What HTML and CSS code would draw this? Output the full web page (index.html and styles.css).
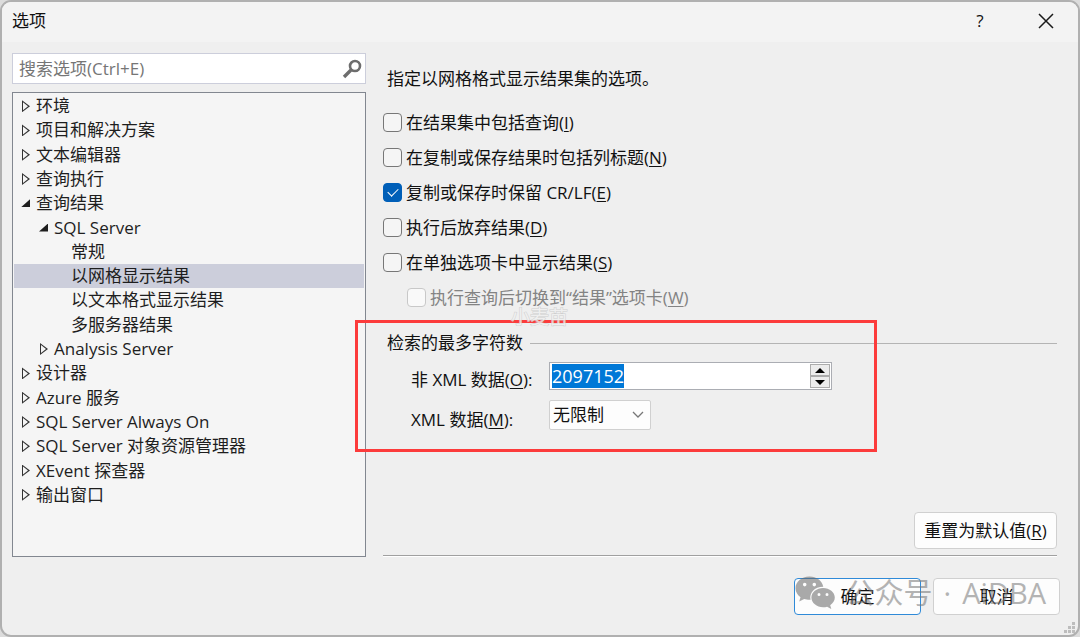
FILE: index.html
```html
<!DOCTYPE html>
<html lang="zh-CN">
<head>
    <meta charset="UTF-8">
    <meta name="viewport" content="width=device-width, initial-scale=1.0">
    <title>选项</title>
    <link rel="stylesheet" href="styles.css">
</head>
<body>

    <div class="dialog" role="dialog" aria-labelledby="dialogTitle">
        <!-- Title bar -->
        <header class="titlebar">
            <h1 class="title" id="dialogTitle">选项</h1>
            <button class="title-btn help" type="button">?</button>
            <button class="title-btn" type="button" aria-label="关闭">
                <svg width="16" height="16" viewBox="0 0 16 16"><path d="M1 1l14 14M15 1L1 15" stroke="#1a1a1a" stroke-width="1.5" fill="none"/></svg>
            </button>
        </header>

        <main class="content">
            <!-- Search and tree -->
            <nav class="sidebar">
                <div class="search">
                    <input type="text" placeholder="搜索选项(Ctrl+E)" aria-label="搜索选项">
                    <svg width="20" height="20" viewBox="0 0 20 20" fill="none" stroke="#6d6d6d"><circle cx="13" cy="7" r="5" stroke-width="2.6"/><path d="M9.500 10.500L2 18" stroke-width="3.4"/></svg>
                </div>
                <ul class="tree" role="tree">
                    <li class="closed" role="treeitem">环境</li>
                    <li class="closed" role="treeitem">项目和解决方案</li>
                    <li class="closed" role="treeitem">文本编辑器</li>
                    <li class="closed" role="treeitem">查询执行</li>
                    <li class="open" role="treeitem">查询结果</li>
                    <li class="open level-2" role="treeitem">SQL Server</li>
                    <li class="level-3" role="treeitem">常规</li>
                    <li class="level-3 selected" role="treeitem">以网格显示结果</li>
                    <li class="level-3" role="treeitem">以文本格式显示结果</li>
                    <li class="level-3" role="treeitem">多服务器结果</li>
                    <li class="closed level-2" role="treeitem">Analysis Server</li>
                    <li class="closed" role="treeitem">设计器</li>
                    <li class="closed" role="treeitem">Azure 服务</li>
                    <li class="closed" role="treeitem">SQL Server Always On</li>
                    <li class="closed" role="treeitem">SQL Server 对象资源管理器</li>
                    <li class="closed" role="treeitem">XEvent 探查器</li>
                    <li class="closed" role="treeitem">输出窗口</li>
                </ul>
            </nav>

            <!-- Options pane -->
            <section class="pane">
                <p class="description">指定以网格格式显示结果集的选项。</p>

                <div class="options">
                    <label class="option"><input type="checkbox"><span>在结果集中包括查询(<u>I</u>)</span></label>
                    <label class="option"><input type="checkbox"><span>在复制或保存结果时包括列标题(<u>N</u>)</span></label>
                    <label class="option"><input type="checkbox" checked><span>复制或保存时保留 CR/LF(<u>E</u>)</span></label>
                    <label class="option"><input type="checkbox"><span>执行后放弃结果(<u>D</u>)</span></label>
                    <label class="option"><input type="checkbox"><span>在单独选项卡中显示结果(<u>S</u>)</span></label>
                    <label class="option nested"><input type="checkbox" disabled><span>执行查询后切换到“结果”选项卡(<u>W</u>)</span></label>
                </div>

                <fieldset class="group">
                    <legend>检索的最多字符数</legend>
                    <div class="field">
                        <label for="nonXml">非 XML 数据(<u>O</u>):</label>
                        <div class="spinner">
                            <input type="text" inputmode="numeric" id="nonXml" value="2097152">
                            <div class="spinner-btns">
                                <button type="button" aria-label="增加"><svg width="10" height="5" viewBox="0 0 10 5"><path d="M0 5L5 0l5 5z"/></svg></button>
                                <button type="button" aria-label="减少"><svg width="10" height="5" viewBox="0 0 10 5"><path d="M0 0l5 5 5-5z"/></svg></button>
                            </div>
                        </div>
                    </div>
                    <div class="field">
                        <label for="xml">XML 数据(<u>M</u>):</label>
                        <div class="select">
                            <select id="xml">
                                <option>无限制</option>
                            </select>
                            <svg width="12" height="8" viewBox="0 0 12 8"><path d="M1 1l5 5 5-5" fill="none" stroke="#777" stroke-width="1.3"/></svg>
                        </div>
                    </div>
                    <div class="highlight"></div>
                    <span class="stamp">小麦苗</span>
                </fieldset>

                <button class="btn reset" type="button">重置为默认值(<u>R</u>)</button>
            </section>
        </main>

        <footer class="footer">
            <button class="btn primary" type="button">确定</button>
            <button class="btn" type="button">取消</button>
            <div class="watermark">
                <svg width="40" height="34" viewBox="0 0 40 34">
                    <path fill-rule="evenodd" d="M14.500 0.500C6.500 0.500 0.500 5.700 0.500 12.200c0 3.700 2 6.900 5 9L4.200 25.500l5-2.500c1.700.5 3.200.8 5.300.8h1.100C14 17 19.500 10.700 28.300 10.700 27 4.700 21.500.5 14.500.5zM9.700 6.800a1.800 1.800 0 1 1 0 3.600 1.800 1.800 0 0 1 0-3.600zm9.600 0a1.800 1.800 0 1 1 0 3.600 1.800 1.800 0 0 1 0-3.600z"/>
                    <path fill-rule="evenodd" d="M39.800 21.600c0-5.300-5.300-9.600-11.700-9.600s-11.700 4.300-11.700 9.600 5.300 9.700 11.700 9.700c1.400 0 2.800-.3 4-.6l4.200 2.200-1.100-3.700c2.800-1.800 4.600-4.500 4.600-7.600zM24 17a1.500 1.500 0 1 1 0 3 1.500 1.500 0 0 1 0-3zm8 0a1.500 1.500 0 1 1 0 3 1.500 1.500 0 0 1 0-3z"/>
                </svg>
                <span>公众号</span>
                <span>·</span>
                <span>AiDBA</span>
            </div>
        </footer>

        <svg class="grip" width="11" height="11" viewBox="0 0 11 11"><path d="M8 0h3v3H8zM4 4h3v3H4zM8 4h3v3H8zM0 8h3v3H0zM4 8h3v3H4zM8 8h3v3H8z"/></svg>
    </div>

    <script>
        document.getElementById("nonXml").select();
    </script>
</body>
</html>
```
FILE: styles.css
```css
/* Base */
* {
    margin: 0;
    padding: 0;
    box-sizing: border-box;
}

body {
    background-color: #dcdcdc;
    color: #111;
    font-family: "Open Sans", "Noto Sans CJK SC", sans-serif;
    font-size: 17px;
    line-height: 24px;
}

button,
input,
select {
    font: inherit;
    color: inherit;
}

u {
    text-underline-offset: 2px;
    text-decoration-thickness: 1px;
}

.dialog {
    position: relative;
    display: flex;
    flex-direction: column;
    min-height: 100vh;
    background-color: #efefef;
    border: 2px solid #b0b0b0;
    border-radius: 11px;
    overflow: hidden;
}

/* Title bar */
.titlebar {
    display: flex;
    align-items: center;
    height: 40px;
    padding: 0 16px 2px 10px;
    background-color: #f3f3f3;
}

.title {
    flex: 1;
    font-size: 17px;
    font-weight: normal;
}

.title-btn {
    display: flex;
    align-items: center;
    justify-content: center;
    width: 32px;
    height: 32px;
    border: none;
    background: none;
}

.help {
    margin-right: 34px;
}

/* Main area */
.content {
    flex: 1;
    display: flex;
    gap: 17px;
    padding: 11px 21px 0 10px;
}

.sidebar {
    display: flex;
    flex-direction: column;
    gap: 8px;
    width: 354px;
}

.search {
    display: flex;
    align-items: center;
    height: 31px;
    padding: 0 3px 0 6px;
    background-color: #fff;
    border: 1px solid #cccedb;
}

.search input {
    flex: 1;
    min-width: 0;
    border: none;
    outline: none;
    background: none;
}

.search input::placeholder {
    color: #767676;
}

/* Tree */
.tree {
    flex: 1;
    display: grid;
    grid-auto-rows: 1fr;
    padding: 1px 1px 49px;
    list-style: none;
    background-color: #f5f5f5;
    border: 1px solid #828790;
    color: #1e1e1e;
}

.tree li {
    display: flex;
    align-items: center;
    padding-left: 8px;
}

.tree li::before {
    content: "";
    width: 8px;
    height: 12px;
    margin-right: 6px;
}

.tree .closed::before {
    background-color: #333;
    clip-path: polygon(evenodd, 0 0, 8px 6px, 0 12px, 0 0, 1px 2px, 1px 10px, 6px 6px, 1px 2px);
}

.tree .open::before {
    width: 9px;
    height: 8px;
    margin: 0 6px 0 -1px;
    background-color: #1e1e1e;
    clip-path: polygon(100% 0, 100% 100%, 0 100%);
}

.tree .level-2 {
    padding-left: 26px;
}

.tree .level-3 {
    padding-left: 43px;
}

.tree .selected {
    background-color: #cccedb;
}

/* Options pane */
.pane {
    flex: 1;
    display: flex;
    flex-direction: column;
    padding: 14px 0 6px;
    border-bottom: 1px solid #a0a0a0;
    box-shadow: 0 1px #fff;
    margin-bottom: 1px;
}

.description {
    padding-left: 4px;
    margin-bottom: 14px;
}

.option {
    display: flex;
    align-items: center;
    gap: 4px;
    height: 35px;
}

.option input {
    appearance: none;
    display: flex;
    align-items: center;
    justify-content: center;
    width: 19px;
    height: 19px;
    background-color: #f5f5f5;
    border: 1px solid #777;
    border-radius: 4px;
}

.option input:checked {
    background-color: #005fb8;
    border-color: #005fb8;
}

.option input:checked::before {
    content: "";
    width: 9px;
    height: 5px;
    margin-bottom: 3px;
    border: solid #fff;
    border-width: 0 0 1px 1px;
    transform: rotate(-45deg);
}

.option input:disabled {
    background-color: #f9f9f9;
    border-color: #c8c8c8;
}

.nested {
    padding-left: 24px;
    color: #838383;
}

/* Group with limits */
.group {
    position: relative;
    margin-top: 16px;
    padding-top: 7px;
    border: none;
    border-top: 1px solid #b4b4b4;
}

.group legend {
    padding: 0 7px 0 4px;
}

.field {
    display: flex;
    align-items: flex-end;
    margin-bottom: 10px;
    padding-left: 28px;
}

.field label {
    width: 138px;
    line-height: 20px;
}

.spinner {
    display: flex;
    width: 283px;
    height: 28px;
    padding: 1px;
    background-color: #fff;
    border: 1px solid #abadb3;
}

.spinner input {
    flex: 1;
    min-width: 0;
    padding-left: 1px;
    border: none;
    outline: none;
    font-size: 18px;
}

.spinner input::selection {
    background-color: #0078d7;
    color: #fff;
}

.spinner-btns {
    display: flex;
    flex-direction: column;
    width: 20px;
}

.spinner-btns button {
    flex: 1;
    display: flex;
    align-items: center;
    justify-content: center;
    min-height: 0;
    background-color: #ececec;
    border: 1px solid #acacac;
}

.select {
    display: flex;
    align-items: center;
    width: 102px;
    height: 30px;
    padding-right: 6px;
    background-color: #fdfdfd;
    border: 1px solid #d0d0d0;
    border-radius: 2px;
}

.select select {
    appearance: none;
    flex: 1;
    min-width: 0;
    padding-left: 3px;
    border: none;
    background: none;
}

/* Red frame around the limits */
.highlight {
    position: absolute;
    top: -35px;
    left: -28px;
    width: 522px;
    height: 132px;
    border: 3px solid #fc3b3b;
    pointer-events: none;
}

.stamp {
    position: absolute;
    top: -50px;
    left: 128px;
    font-size: 19px;
    color: #efefef;
    -webkit-text-stroke: 1px #c8c8c8;
    paint-order: stroke fill;
    opacity: 0.8;
    pointer-events: none;
}

/* Buttons */
.btn {
    width: 127px;
    height: 37px;
    background-color: #fdfdfd;
    border: 1px solid #d0d0d0;
    border-radius: 4px;
}

.reset {
    width: 143px;
    margin-top: auto;
    align-self: flex-end;
}

.primary {
    border-color: #2f8ad8;
}

.footer {
    position: relative;
    display: flex;
    justify-content: flex-end;
    gap: 12px;
    padding: 21px 18px 20px;
}

/* Account watermark over the footer */
.watermark {
    position: absolute;
    top: 18px;
    right: 32px;
    display: flex;
    align-items: center;
    gap: 11px;
    color: #777;
    fill: #666;
    font-size: 29px;
    line-height: 36px;
    opacity: 0.55;
    pointer-events: none;
}

.grip {
    position: absolute;
    right: 3px;
    bottom: 2px;
    fill: #bdbdbd;
}
```
